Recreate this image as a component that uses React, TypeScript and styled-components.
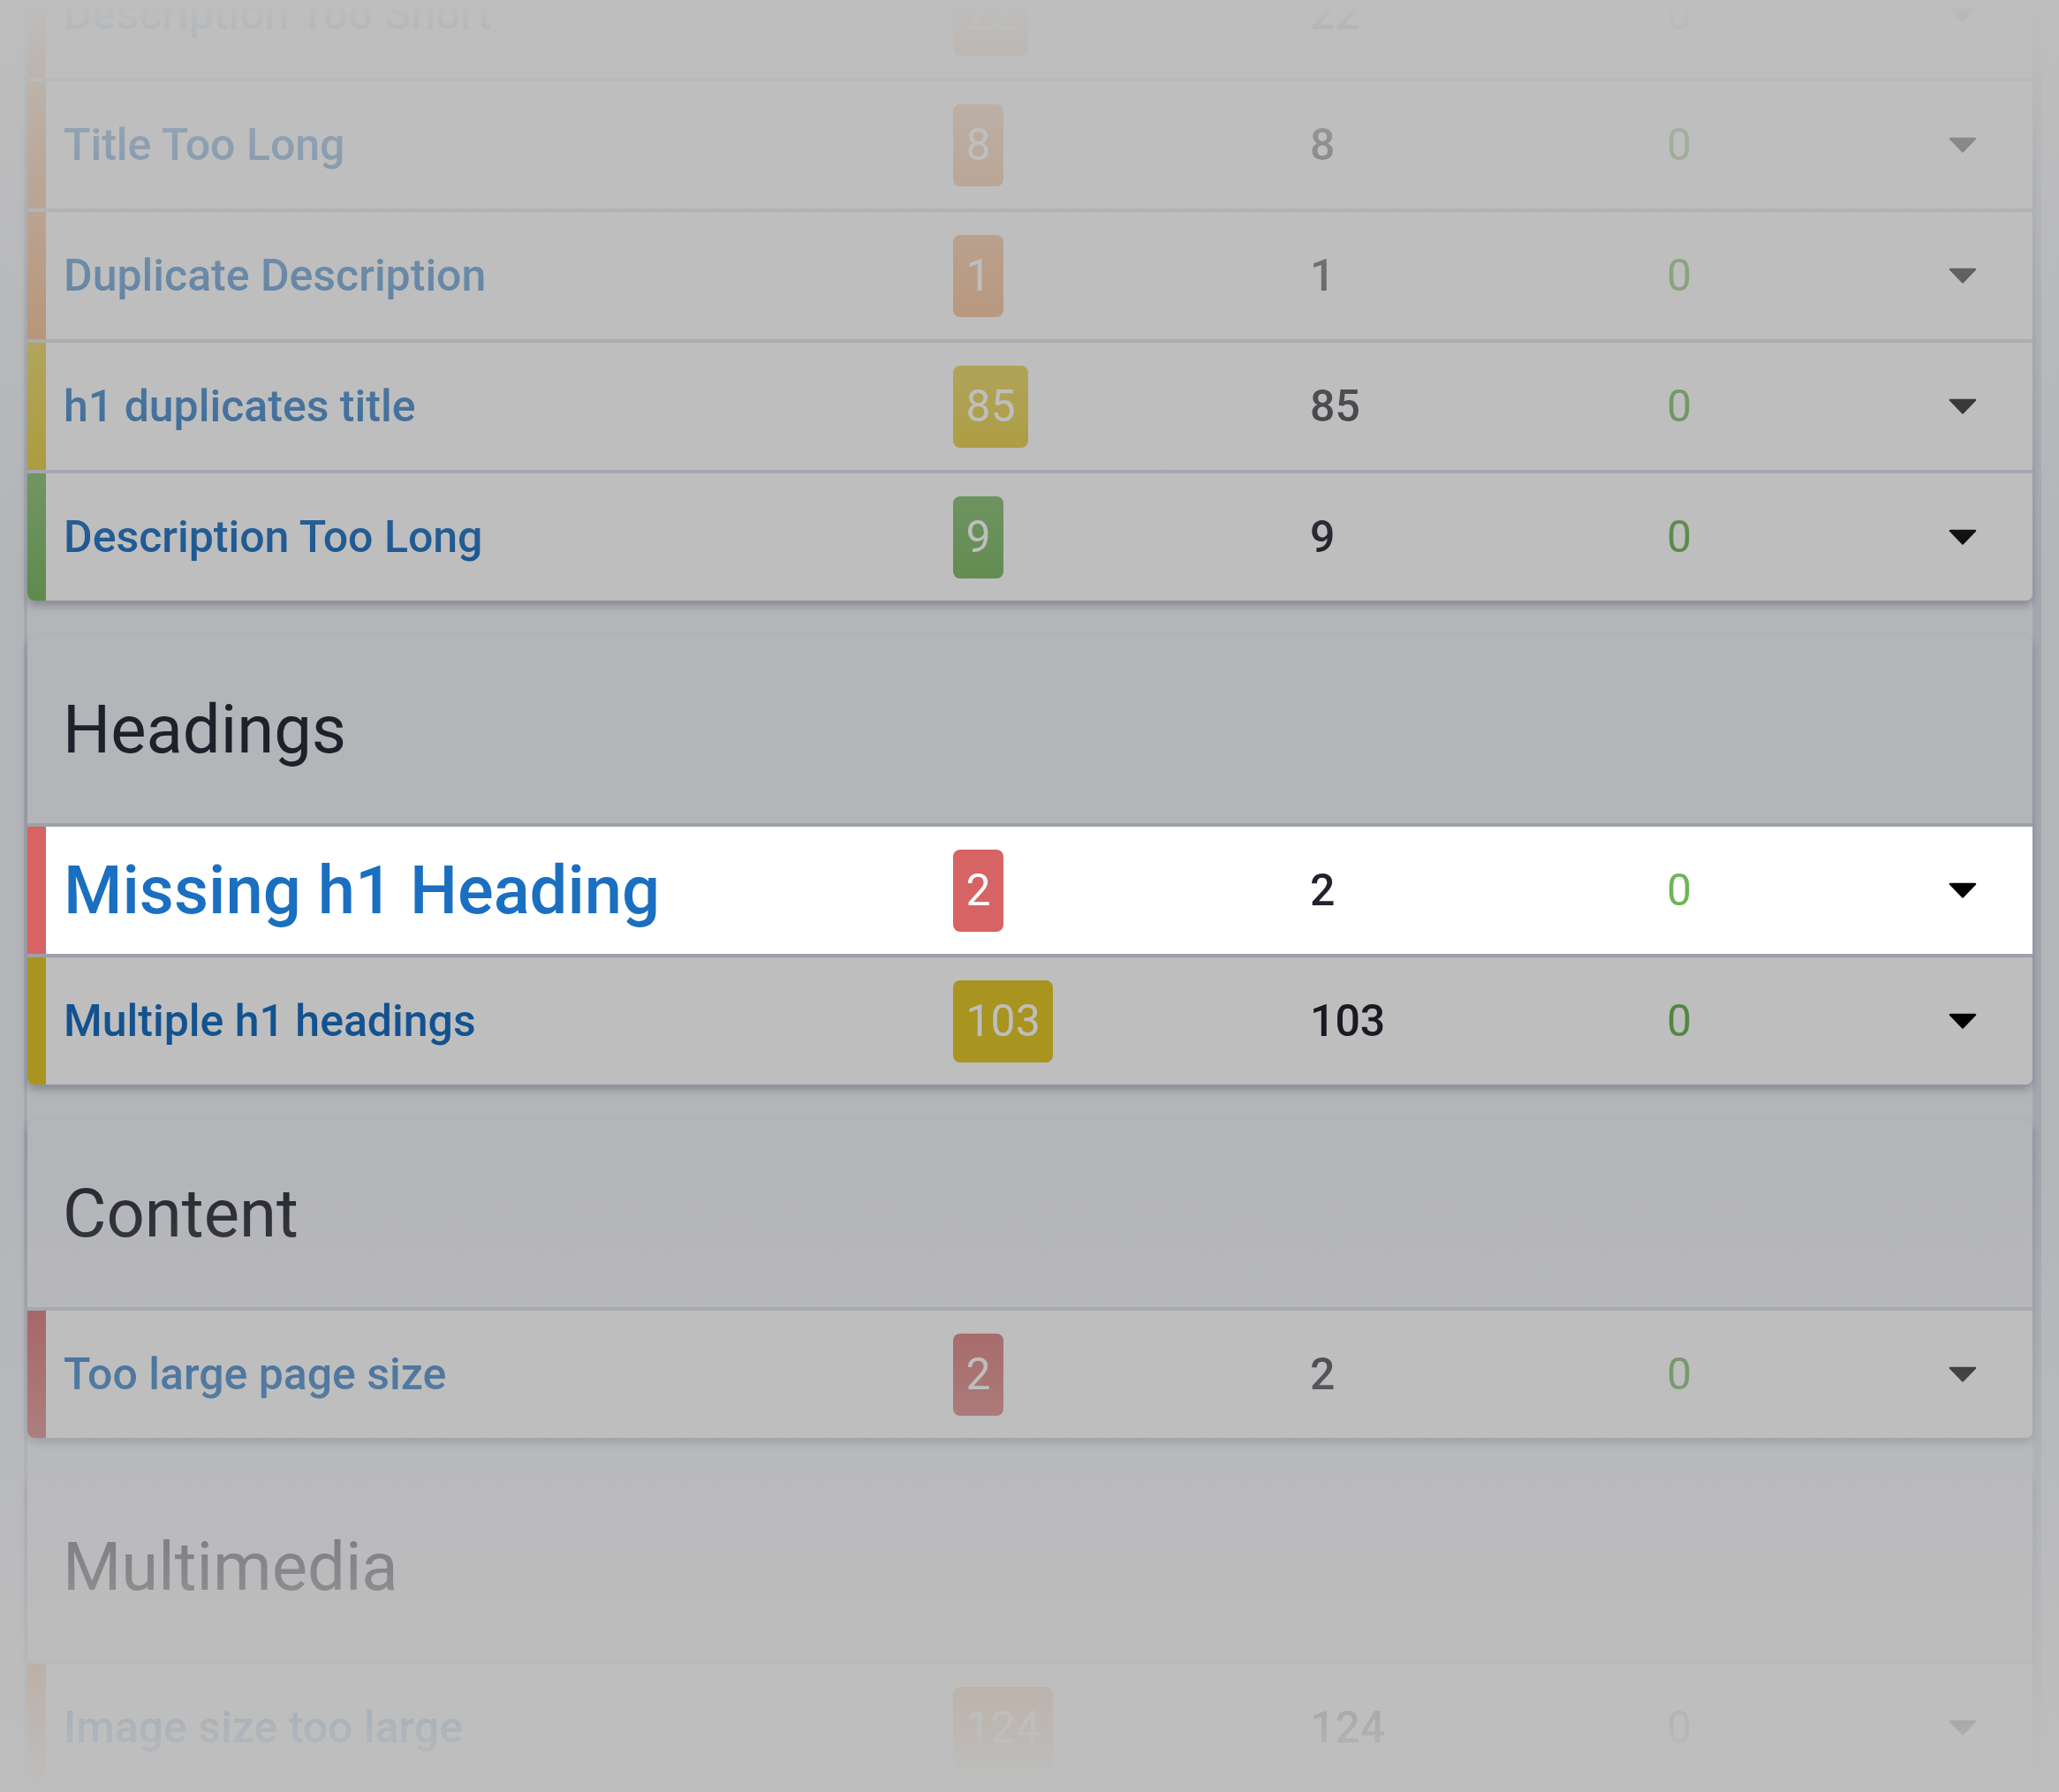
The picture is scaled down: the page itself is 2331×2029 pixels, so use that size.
import React from 'react';
import styled, { createGlobalStyle } from 'styled-components';

const GlobalStyle = createGlobalStyle`
  html, body {
    margin: 0;
    padding: 0;
  }
  body {
    font-family: Roboto, 'Liberation Sans', sans-serif;
    background: #f1f3f8;
  }
`;

const Page = styled.div`
  position: relative;
  height: 2029px;
  overflow: hidden;
  padding: 0 20px 0 27px;
  background: #f1f3f8;
`;

const Panel = styled.div`
  display: flex;
  flex-direction: column;
  gap: 40px;
  margin-top: -56px;
  min-height: 2300px;
  border-left: 4px solid #dde0ea;
  border-right: 10px solid #dde0ea;
`;

const Card = styled.section`
  display: flex;
  flex-direction: column;
  gap: 4px;
  background: #d4d8e5;
  border-radius: 8px;
  overflow: hidden;
  box-shadow: 0 6px 10px rgba(40, 50, 80, 0.28);
`;

const CardHeader = styled.h2`
  margin: 0;
  height: 212px;
  display: flex;
  align-items: center;
  padding-left: 40px;
  background: #f2f3f8;
  font-size: 76px;
  font-weight: 400;
  color: #2a2b37;
`;

const Row = styled.div<{ $active?: boolean }>`
  position: relative;
  z-index: ${p => (p.$active ? 2 : 'auto')};
  display: grid;
  grid-template-columns: 21px 1027px 404px 404px 1fr 32px;
  align-items: center;
  height: 144px;
  padding-right: 63px;
  background: #fff;
`;

const Strip = styled.span<{ $color: string }>`
  align-self: stretch;
  background: ${p => p.$color};
`;

const Title = styled.a<{ $active?: boolean }>`
  padding-left: 20px;
  font-size: ${p => (p.$active ? 76 : 50)}px;
  font-weight: 500;
  color: #1a6fc0;
  text-decoration: none;
  white-space: nowrap;
`;

const BadgeCell = styled.div`
  display: flex;
`;

const Badge = styled.span<{ $color: string }>`
  display: inline-flex;
  align-items: center;
  height: 93px;
  padding: 0 14.5px;
  border-radius: 8px;
  background: ${p => p.$color};
  color: #fff;
  font-size: 50px;
  font-weight: 400;
`;

const Count = styled.span`
  font-size: 50px;
  font-weight: 500;
  color: #22232e;
`;

const Zero = styled.span`
  font-size: 50px;
  font-weight: 400;
  color: #6fb556;
`;

const Caret = styled.svg`
  display: block;
  width: 32px;
  height: 18px;
`;

const Dim = styled.div`
  position: absolute;
  inset: 0;
  z-index: 1;
  background: rgba(0, 0, 0, 0.255);
  pointer-events: none;
`;

const Fade = styled.div<{ $side: 'top' | 'bottom' }>`
  position: absolute;
  left: 0;
  right: 0;
  z-index: 3;
  pointer-events: none;
  ${p =>
    p.$side === 'top'
      ? `top: 0; height: 672px; background: linear-gradient(to bottom, rgba(190,190,190,1) 0px, rgba(190,190,190,0.93) 40px, rgba(190,190,190,0.72) 160px, rgba(190,190,190,0) 672px);`
      : `bottom: 0; height: 729px; background: linear-gradient(to top, rgba(190,190,190,1), rgba(190,190,190,0));`}
`;

const RED = '#d66464';
const ORANGE = '#f2a466';
const YELLOW = '#e2c72a';
const GREEN = '#82bb6a';

type Issue = { title: string; count: number; color: string; active?: boolean };
type Group = { name?: string; issues: Issue[] };

const groups: Group[] = [
  {
    issues: [
      { title: 'Description Too Short', count: 22, color: ORANGE },
      { title: 'Title Too Long', count: 8, color: ORANGE },
      { title: 'Duplicate Description', count: 1, color: ORANGE },
      { title: 'h1 duplicates title', count: 85, color: YELLOW },
      { title: 'Description Too Long', count: 9, color: GREEN },
    ],
  },
  {
    name: 'Headings',
    issues: [
      { title: 'Missing h1 Heading', count: 2, color: RED, active: true },
      { title: 'Multiple h1 headings', count: 103, color: YELLOW },
    ],
  },
  {
    name: 'Content',
    issues: [{ title: 'Too large page size', count: 2, color: RED }],
  },
  {
    name: 'Multimedia',
    issues: [{ title: 'Image size too large', count: 124, color: ORANGE }],
  },
];

function IssueRow({ issue }: { issue: Issue }) {
  return (
    <Row $active={issue.active}>
      <Strip $color={issue.color} />
      <Title href="#" $active={issue.active}>{issue.title}</Title>
      <BadgeCell>
        <Badge $color={issue.color}>{issue.count}</Badge>
      </BadgeCell>
      <Count>{issue.count}</Count>
      <Zero>0</Zero>
      <Caret viewBox="0 0 32 18">
        <path d="M2 2 L30 2 L16 16.5 Z" fill="#000" stroke="#000" strokeWidth="2.5" strokeLinejoin="round" />
      </Caret>
    </Row>
  );
}

export default function App() {
  return (
    <>
      <GlobalStyle />
      <Page>
        <Panel>
          {groups.map((g, i) => (
            <Card key={i}>
              {g.name && <CardHeader>{g.name}</CardHeader>}
              {g.issues.map(issue => (
                <IssueRow key={issue.title} issue={issue} />
              ))}
            </Card>
          ))}
        </Panel>
        <Dim />
        <Fade $side="top" />
        <Fade $side="bottom" />
      </Page>
    </>
  );
}
